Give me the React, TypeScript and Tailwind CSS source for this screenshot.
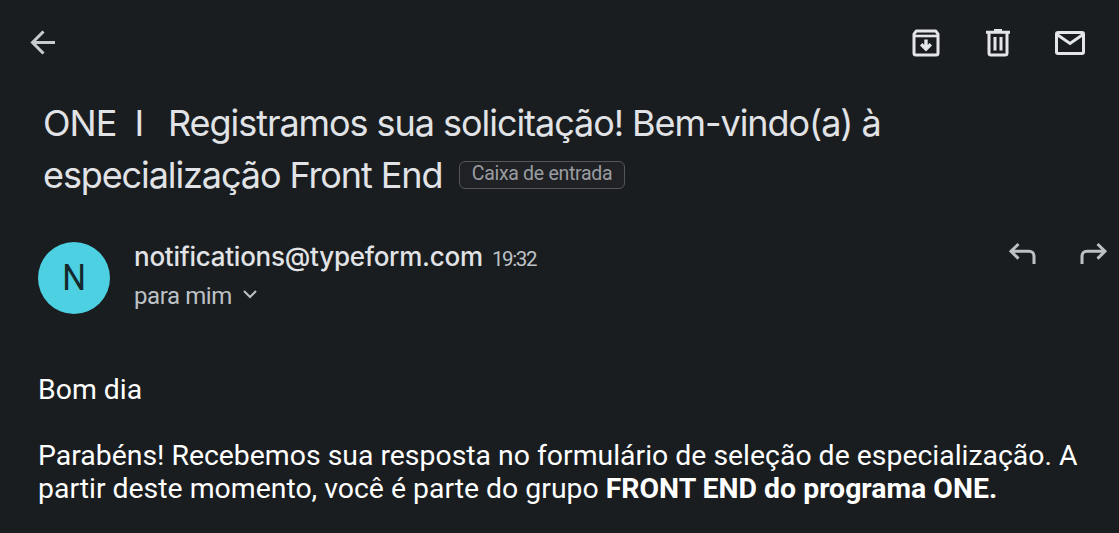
import type { ReactNode } from 'react';

type IconProps = {
  children: ReactNode;
  className?: string;
};

const Icon = ({ children, className = '' }: IconProps) => (
  <svg
    viewBox="0 0 36 36"
    fill="none"
    stroke="currentColor"
    strokeWidth="3"
    className={`h-9 w-9 shrink-0 ${className}`}
    aria-hidden="true"
  >
    {children}
  </svg>
);

const Toolbar = () => (
  <header className="flex items-center justify-between pt-[25px] pr-[31px] pl-[25px] text-[#e3e5e8]">
    <button type="button" aria-label="Voltar" className="text-[#c8cbd0]">
      <Icon>
        <path d="M30 17.5H8M18.5 6.5L7.5 17.5L18.5 28.5" strokeWidth="3" />
      </Icon>
    </button>

    <div className="flex gap-9">
      <button type="button" aria-label="Arquivar">
        <Icon>
          <path d="M6 9.2L8.2 6H27.8L30 9.2V28C30 29.2 29.2 30 28 30H8C6.8 30 6 29.2 6 28Z" strokeLinejoin="round" />
          <path d="M6 11H30" strokeWidth="2.6" />
          <path d="M18 14.5V24M13.2 19.2L18 24L22.8 19.2" strokeWidth="3.4" />
        </Icon>
      </button>
      <button type="button" aria-label="Excluir">
        <Icon>
          <path d="M6 7.3H30M14 5.5H22" />
          <path d="M9 8V28C9 29.2 9.8 30 11 30H25C26.2 30 27 29.2 27 28V8" />
          <path d="M15 12V25.5M21 12V25.5" />
        </Icon>
      </button>
      <button type="button" aria-label="Marcar como não lida">
        <Icon>
          <rect x="4.5" y="7.5" width="27" height="21" rx="1.5" />
          <path d="M5 9.5L18 18.5L31 9.5" />
        </Icon>
      </button>
    </div>
  </header>
);

const Subject = () => (
  <h1 className="mt-9 pl-[43px] font-['Inter',sans-serif] text-[36px] leading-[52px] text-[#e1e3e6]">
    <span className="block whitespace-pre">
      <span className="inline-block w-[125px] tracking-[-1px]">{'ONE  I'}</span>
      <span className="tracking-[-1.05px]">Registramos sua solicitação! Bem-vindo(a) à</span>
    </span>
    <span className="flex items-center">
      <span className="w-[400px] tracking-[-1.1px] whitespace-nowrap">especialização Front End</span>
      <span className="ml-4 flex h-7 w-[166px] items-center justify-center rounded-md border border-[#54565a] bg-[#202124] pb-[3px] font-['Roboto',sans-serif] text-[19.5px] leading-none tracking-[-0.3px] text-[#9a9da1]">
        Caixa de entrada
      </span>
    </span>
  </h1>
);

const Sender = () => (
  <section className="mt-[41px] flex pr-[7px] pl-[38px]">
    <div className="flex h-[72px] w-[72px] items-center justify-center rounded-full bg-[#4dd0e1] text-[#15292d]">
      <span className="scale-x-90 font-['Roboto',sans-serif] text-[37px]">N</span>
    </div>

    <div className="ml-6 flex-1">
      <p className="flex items-baseline leading-[30px] whitespace-nowrap">
        <span className="w-[348px] font-['Inter',sans-serif] text-[26px] font-medium tracking-[-0.25px] text-[#e1e3e6]">
          notifications@typeform.com
        </span>
        <span className="ml-2.5 font-['Roboto',sans-serif] text-[20.5px] tracking-[-1.4px] text-[#bfc2c7]">19:32</span>
      </p>
      <p className="mt-2 flex items-center text-[#bdc1c6]">
        <span className="font-['Roboto',sans-serif] text-[24px] leading-7 tracking-[-0.4px]">para mim</span>
        <svg viewBox="0 0 14 9" fill="none" stroke="currentColor" strokeWidth="2" className="-mt-1 ml-[11px] h-[9px] w-3.5" aria-hidden="true">
          <path d="M1 1L7 7L13 1" />
        </svg>
      </p>
    </div>

    <div className="flex h-9 gap-9 text-[#bdc1c6]">
      <button type="button" aria-label="Responder">
        <Icon className="-mt-3.5">
          <path d="M7 16.3H25C28 16.3 30 18.3 30 21.3V29M14.5 9L7 16.3L14.5 23.6" />
        </Icon>
      </button>
      <button type="button" aria-label="Encaminhar">
        <Icon className="-mt-3.5">
          <path d="M29 16.3H11C8 16.3 6 18.3 6 21.3V29M21.5 9L29 16.3L21.5 23.6" />
        </Icon>
      </button>
    </div>
  </section>
);

const MessageBody = () => (
  <article className="mt-[59px] pl-[38px] font-['Roboto',sans-serif] text-[28.4px] leading-[33px] whitespace-nowrap text-white">
    <p>Bom dia</p>
    <p className="mt-[33px]">
      Parabéns! Recebemos sua resposta no formulário de seleção de especialização. A
      <br />
      partir deste momento, você é parte do grupo <strong className="font-bold">FRONT END do programa ONE.</strong>
    </p>
  </article>
);

const App = () => {
  return (
    <main className="h-screen overflow-hidden bg-[#1a1d20]">
      <Toolbar />
      <Subject />
      <Sender />
      <MessageBody />
    </main>
  );
};

export default App;
